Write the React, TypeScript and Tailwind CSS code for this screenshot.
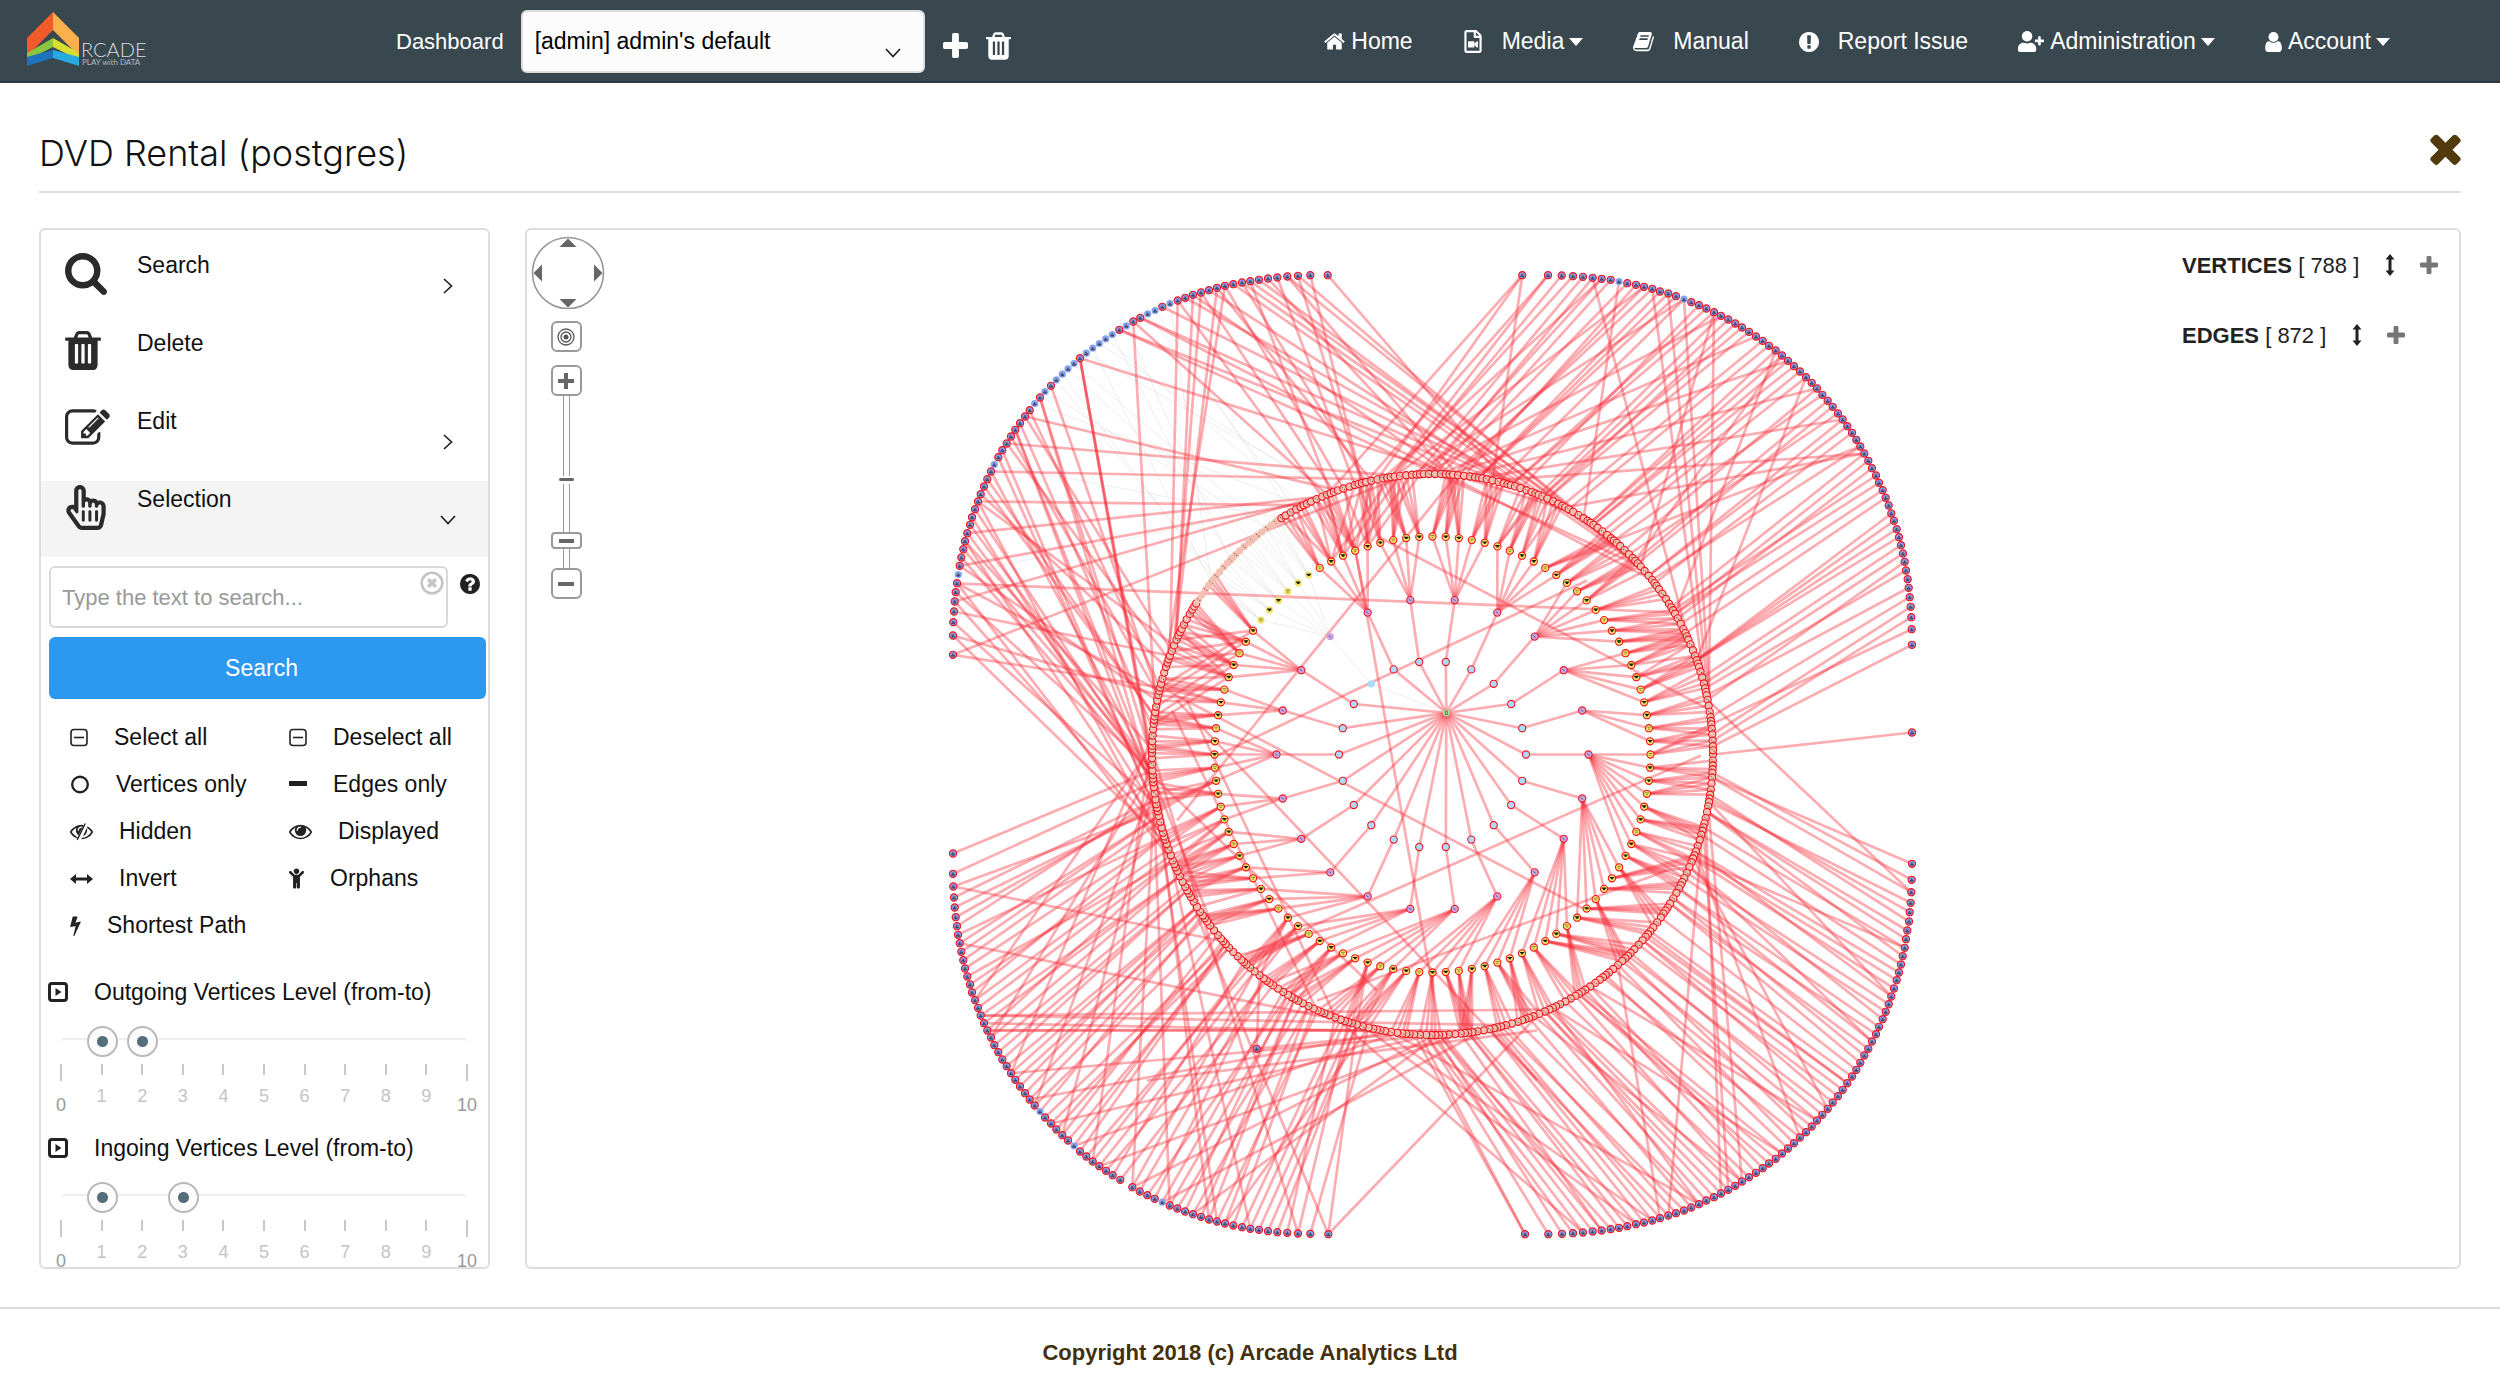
import { useState } from "react";
import type { ReactNode } from "react";
import { FaChild, FaRegFileVideo, FaRegHandPointer, FaUserPlus } from "react-icons/fa";
import clsx from "clsx";

/* ---------- icons ---------- */

const ICONS = {
    plus: "M1600 736v192q0 40-28 68t-68 28h-416v416q0 40-28 68t-68 28h-192q-40 0-68-28t-28-68v-416h-416q-40 0-68-28t-28-68v-192q0-40 28-68t68-28h416v-416q0-40 28-68t68-28h192q40 0 68 28t28 68v416h416q40 0 68 28t28 68z",
    times: "M1490 1322q0 40-28 68l-136 136q-28 28-68 28t-68-28l-294-294-294 294q-28 28-68 28t-68-28l-136-136q-28-28-28-68t28-68l294-294-294-294q-28-28-28-68t28-68l136-136q28-28 68-28t68 28l294 294 294-294q28-28 68-28t68 28l136 136q28 28 28 68t-28 68l-294 294 294 294q28 28 28 68z",
    trash: "M704 1376v-704q0-14-9-23t-23-9h-64q-14 0-23 9t-9 23v704q0 14 9 23t23 9h64q14 0 23-9t9-23zm256 0v-704q0-14-9-23t-23-9h-64q-14 0-23 9t-9 23v704q0 14 9 23t23 9h64q14 0 23-9t9-23zm256 0v-704q0-14-9-23t-23-9h-64q-14 0-23 9t-9 23v704q0 14 9 23t23 9h64q14 0 23-9t9-23zm-544-992h448l-48-117q-7-9-17-11h-317q-10 2-17 11zm928 32v64q0 14-9 23t-23 9h-96v948q0 83-47 143.500t-113 60.500h-832q-66 0-113-58.500t-47-141.500v-952h-96q-14 0-23-9t-9-23v-64q0-14 9-23t23-9h309l70-167q15-37 54-63t79-26h320q40 0 79 26t54 63l70 167h309q14 0 23 9t9 23z",
    search: "M1216 832q0-185-131.500-316.500t-316.500-131.500-316.500 131.500-131.500 316.500 131.500 316.500 316.500 131.500 316.500-131.500 131.500-316.500zm512 832q0 52-38 90t-90 38q-54 0-90-38l-343-342q-179 124-399 124-143 0-273.500-55.500t-225-150-150-225-55.500-273.500 55.500-273.500 150-225 225-150 273.500-55.500 273.500 55.500 225 150 150 225 55.500 273.500q0 220-124 399l343 343q37 37 37 90z",
    edit: "M888 1184l116-116-152-152-116 116v56h96v96h56zm440-720q-16-16-33 1l-350 350q-17 17-1 33t33-1l350-350q17-17 1-33zm80 594v190q0 119-84.500 203.500t-203.500 84.500h-832q-119 0-203.500-84.500t-84.500-203.500v-832q0-119 84.500-203.500t203.500-84.500h832q63 0 117 25 15 7 18 23 3 17-9 29l-49 49q-14 14-32 8-23-6-45-6h-832q-66 0-113 47t-47 113v832q0 66 47 113t113 47h832q66 0 113-47t47-113v-126q0-13 9-22l64-64q15-15 35-7t20 29zm-96-738l288 288-672 672h-288v-288zm444 132l-92 92-288-288 92-92q28-28 68-28t68 28l152 152q28 28 28 68t-28 68z",
    home: "M1472 992v480q0 26-19 45t-45 19h-384v-384h-256v384h-384q-26 0-45-19t-19-45v-480q0-1 .5-3t.5-3l575-474 575 474q1 2 1 6zm223-69l-62 74q-8 9-21 11h-3q-13 0-21-7l-692-577-692 577q-12 8-24 7-13-2-21-11l-62-74q-8-10-7-23.500t11-21.500l719-599q32-26 76-26t76 26l244 204v-195q0-14 9-23t23-9h192q14 0 23 9t9 23v408l219 182q10 8 11 21.500t-7 23.500z",
    user: "M1536 1399q0 109-62.500 187t-150.500 78h-854q-88 0-150.500-78t-62.500-187q0-85 8.500-160.500t31.500-152 58.500-131 94-89 134.500-34.500q131 128 313 128t313-128q76 0 134.500 34.500t94 89 58.500 131 31.500 152 8.500 160.500zm-256-887q0 159-112.500 271.500t-271.500 112.500-271.500-112.500-112.500-271.500 112.500-271.500 271.500-112.500 271.500 112.500 112.500 271.500z",
    eye: "M1664 960q-152-236-381-353 61 104 61 225 0 185-131.500 316.500t-316.500 131.500-316.500-131.500-131.500-316.500q0-121 61-225-229 117-381 353 133 205 333.500 326.500t434.500 121.500 434.500-121.500 333.500-326.500zm-720-384q0-20-14-34t-34-14q-125 0-214.500 89.500t-89.500 214.500q0 20 14 34t34 14 34-14 14-34q0-86 61-147t147-61q20 0 34-14t14-34zm848 384q0 34-20 69-140 230-376.500 368.500t-499.500 138.500-499.500-139-376.500-368q-20-35-20-69t20-69q140-229 376.500-368t499.500-139 499.500 139 376.500 368q20 35 20 69z",
    bolt: "M1333 566q18 20 7 44l-540 1157q-13 25-42 25-4 0-14-2-17-5-25.500-19t-4.500-30l197-808-406 101q-4 1-12 1-18 0-31-11-18-15-13-39l201-825q4-14 16-23t28-9h328q19 0 32 12.500t13 29.500q0 8-5 18l-171 463 396-98q8-2 12-2 19 0 34 15z",
    question: "M1024 1376v-192q0-14-9-23t-23-9h-192q-14 0-23 9t-9 23v192q0 14 9 23t23 9h192q14 0 23-9t9-23zm256-672q0-88-55.500-163t-138.500-116-170-41q-243 0-371 213-15 24 8 42l132 100q7 6 19 6 16 0 25-12 53-68 86-92 34-24 86-24 48 0 85.500 26t37.500 59q0 38-20 61t-68 45q-63 28-115.500 86.500t-52.500 125.500v36q0 14 9 23t23 9h192q14 0 23-9t9-23q0-19 21.500-49.500t54.500-49.500q32-18 49-28.500t46-35 44.500-48 28-60.500 12.500-81zm384 192q0 209-103 385.500t-279.500 279.500-385.500 103-385.500-103-279.500-279.500-103-385.500 103-385.500 279.500-279.500 385.500-103 385.500 103 279.500 279.500 103 385.500z",
    exclamation: "M896 128q209 0 385.500 103t279.500 279.500 103 385.500-103 385.500-279.500 279.500-385.500 103-385.500-103-279.500-279.500-103-385.500 103-385.500 279.500-279.500 385.500-103zm128 1247v-190q0-14-9-23.500t-22-9.500h-192q-13 0-23 10t-10 23v190q0 13 10 23t23 10h192q13 0 22-9.500t9-23.500zm-2-344l18-621q0-12-10-18-10-8-24-8h-220q-14 0-24 8-10 6-10 18l17 621q0 10 10 17.500t24 7.500h185q14 0 23.500-7.500t10.500-17.500z",
    book: "M1703 478q40 57 18 129l-275 906q-19 64-76.500 107.500t-122.500 43.500h-923q-77 0-148.500-53.500t-99.500-131.500q-24-67-2-127 0-4 3-27t4-37q1-8-3-21.500t-3-19.500q2-11 8-21t16.500-23.500 16.500-23.500q23-38 45-91.500t30-91.500q3-10 .5-30t-.5-28q3-11 17-28t17-23q21-36 42-92t25-90q1-9-2.500-32t.5-28q4-13 22-30.500t22-22.500q19-26 42.500-84.500t27.500-96.500q1-8-3-25.500t-2-26.500q2-8 9-18t18-23 17-21q8-12 16.500-30.500t15-35 16-36 19.500-32 26.500-23.500 36-11.500 47.500 5.500l-1 3q38-9 51-9h761q74 0 114 56t18 130l-274 906q-36 119-71.500 153.500t-128.500 34.500h-869q-27 0-38 15-11 16-1 43 24 70 144 70h923q29 0 56-15.500t35-41.500l300-987q7-22 5-57 38 15 59 43zm-1064 2q-4 13 2 22.500t20 9.500h608q13 0 25.500-9.500t16.500-22.500l21-64q4-13-2-22.500t-20-9.500h-608q-13 0-25.500 9.500t-16.500 22.500zm-83 256q-4 13 2 22.500t20 9.500h608q13 0 25.500-9.500t16.500-22.500l21-64q4-13-2-22.500t-20-9.500h-608q-13 0-25.500 9.500t-16.500 22.500z",
};

interface IconProps {
    name: keyof typeof ICONS;
    box?: string;
    className?: string;
}

// "box" crops the 1792 unit glyph cell to the part that has ink
function Icon({ name, box = "0 0 1792 1792", className }: IconProps) {
    return (
        <svg viewBox={box} fill="currentColor" className={clsx("shrink-0", className)} aria-hidden="true">
            <path d={ICONS[name]} />
        </svg>
    );
}

function Chevron({ down, className }: { down?: boolean; className?: string }) {
    return (
        <svg viewBox="0 0 16 16" fill="none" stroke="#222" strokeWidth="1.7" className={clsx("h-4 w-4 shrink-0", className)} aria-hidden="true">
            <path d={down ? "M1 4l7 7.500L15 4" : "M4 1l7.500 7L4 15"} />
        </svg>
    );
}

function ArrowV() {
    return (
        <svg viewBox="0 0 10 22" fill="#222" className="h-[22px] w-[10px]" aria-hidden="true">
            <path d="M5 0l4.500 5.500H6.500v11h3L5 22 .5 16.500h3v-11h-3z" />
        </svg>
    );
}

function Logo() {
    return (
        <svg viewBox="0 0 128 60" className="h-[60px] w-[128px]" role="img" aria-label="Arcade, play with data">
            <path fill="#f15a2b" d="M26 0v18L0 44V26z" />
            <path fill="#fbb04c" d="M26 0v18l26 26V26z" />
            <path fill="#8cc540" d="M26 26v9L0 48v-7z" />
            <path fill="#d8df30" d="M26 26v9l26 13v-7z" />
            <path fill="#1c75bc" d="M26 38v8L0 54v-9z" />
            <path fill="#27aae1" d="M26 38v8l26 8v-9z" />
            <text x="54" y="45" fontSize="20" fontFamily="Lato, sans-serif" fontWeight="300" fill="#d9dcde">RCADE</text>
            <text x="55" y="53" fontSize="8" fontFamily="Lato, sans-serif" fill="#b4babd">PLAY with DATA</text>
        </svg>
    );
}

/* ---------- header ---------- */

function NavLink({ icon, label, caret, wide }: { icon: ReactNode; label: string; caret?: boolean; wide?: boolean }) {
    return (
        <a href="#" className={clsx("flex items-center", wide ? "gap-[19px]" : "gap-[6px]")}>
            {icon}
            <span className="flex items-center gap-[5px]">
                {label}
                {caret && <span className="border-x-[7px] border-t-[8px] border-x-transparent border-t-white" />}
            </span>
        </a>
    );
}

function Header() {
    return (
        <header className="flex h-[83px] shrink-0 items-center border-b-2 border-[#2b3a42] bg-[#39474f] pt-[2px] pr-[110px] pl-[27px] text-[23px] text-white">
            <a href="#">
                <Logo />
            </a>
            <div className="ml-[241px] flex items-center">
                <label htmlFor="dashboard" className="text-[22px]">Dashboard</label>
                <div className="relative ml-[17px]">
                    <select id="dashboard" className="h-[63px] w-[404px] appearance-none rounded-md border-2 border-[#ddd] bg-[#fcfcfc] pl-3 text-black">
                        <option>[admin] admin&apos;s default</option>
                    </select>
                    <Chevron down className="pointer-events-none absolute right-6 bottom-3" />
                </div>
                <button type="button" aria-label="Add dashboard" className="mt-2 ml-[18px]">
                    <Icon name="plus" box="192 128 1408 1408" className="h-[25px] w-[25px]" />
                </button>
                <button type="button" aria-label="Delete dashboard" className="mt-2 ml-[18px]">
                    <Icon name="trash" box="192 128 1408 1536" className="h-[28px] w-[25px]" />
                </button>
            </div>
            <nav className="ml-auto flex items-center gap-[50px]">
                <NavLink icon={<Icon name="home" box="64 256 1664 1280" className="h-[17px] w-[21px]" />} label="Home" />
                <NavLink icon={<FaRegFileVideo className="h-[23px] w-[20px]" />} label="Media" caret wide />
                <NavLink icon={<Icon name="book" box="60 192 1680 1480" className="h-[20px] w-[21px]" />} label="Manual" wide />
                <NavLink icon={<Icon name="exclamation" box="128 128 1536 1536" className="h-[20px] w-[20px]" />} label="Report Issue" wide />
                <NavLink icon={<FaUserPlus className="h-[21px] w-[26px]" />} label="Administration" caret />
                <NavLink icon={<Icon name="user" box="256 128 1280 1536" className="h-[20px] w-[17px]" />} label="Account" caret />
            </nav>
        </header>
    );
}

/* ---------- left menu ---------- */

function MenuRow({ icon, label, arrow, active }: { icon: ReactNode; label: string; arrow?: "right" | "down"; active?: boolean }) {
    return (
        <button
            type="button"
            className={clsx("flex w-full items-start pr-[32px] pl-[24px] text-left text-[23px]", active ? "h-[76px] bg-[#f4f4f4]" : "h-[78px]")}
        >
            <span className="w-[72px] shrink-0 pt-1 text-[#2b2b2b]">{icon}</span>
            <span className="flex-1 pt-1 leading-7">{label}</span>
            {arrow && <Chevron down={arrow === "down"} className="mt-[31px]" />}
        </button>
    );
}

const strokeIcon = "h-[19px] shrink-0 fill-none stroke-[#222]";

const options: Array<{ label: string; icon: ReactNode }> = [
    { label: "Select all", icon: <MinusSquare /> },
    { label: "Deselect all", icon: <MinusSquare /> },
    { label: "Vertices only", icon: <svg viewBox="0 0 20 20" strokeWidth="2.500" className={clsx(strokeIcon, "w-[20px]")}><circle cx="10" cy="10" r="8.200" /></svg> },
    { label: "Edges only", icon: <svg viewBox="0 0 18 18" strokeWidth="5" className={clsx(strokeIcon, "w-[18px]")}><path d="M0 8h18" /></svg> },
    {
        label: "Hidden",
        icon: (
            <svg viewBox="0 256 1792 1408" className="h-[18px] w-[23px] shrink-0 fill-[#222]">
                <path d={ICONS.eye} />
                <path d="M1330 250L640 1640" stroke="white" strokeWidth="330" />
                <path d="M1190 300L560 1580" stroke="#222" strokeWidth="110" />
            </svg>
        ),
    },
    { label: "Displayed", icon: <Icon name="eye" box="0 256 1792 1408" className="h-[18px] w-[23px] text-[#222]" /> },
    { label: "Invert", icon: <svg viewBox="0 0 23 10" className="h-[10px] w-[23px] shrink-0 fill-[#222]"><path d="M0 5L6 0v3.500h11V0l6 5-6 5V6.500H6V10z" /></svg> },
    { label: "Orphans", icon: <FaChild className="h-[21px] w-[15px] text-[#222]" /> },
    { label: "Shortest Path", icon: <Icon name="bolt" box="448 0 896 1792" className="h-[21px] w-[11px] text-[#222]" /> },
];

function MinusSquare() {
    return (
        <svg viewBox="0 0 18 18" strokeWidth="1.600" className={clsx(strokeIcon, "w-[18px]")}>
            <rect x="1" y="1" width="16" height="16" rx="3" />
            <path d="M4 9h10" />
        </svg>
    );
}

const thumb =
    "[&::-webkit-slider-thumb]:pointer-events-auto [&::-webkit-slider-thumb]:h-[31px] [&::-webkit-slider-thumb]:w-[31px] [&::-webkit-slider-thumb]:appearance-none [&::-webkit-slider-thumb]:rounded-full [&::-webkit-slider-thumb]:border-2 [&::-webkit-slider-thumb]:border-[#b9b9b9] [&::-webkit-slider-thumb]:bg-[radial-gradient(circle,#546e7a_5px,#fcfcfc_6px)]";

function LevelSlider({ label, from, to }: { label: string; from: number; to: number }) {
    const [range, setRange] = useState([from, to]);

    return (
        <section className="h-[156px] pl-[7px]">
            <h3 className="flex items-center gap-[26px] text-[23px] leading-8">
                <svg viewBox="0 0 20 20" className="h-[20px] w-[20px] fill-none stroke-[#222]" strokeWidth="3" aria-hidden="true">
                    <rect x="1.500" y="1.500" width="17" height="17" rx="2.500" />
                    <path d="M7.500 6v8l6-4z" fill="#222" stroke="none" />
                </svg>
                {label}
            </h3>
            <div className="mt-[18px] mr-[21px] ml-[13px]">
                <div className="mx-[-15px] grid h-[31px] items-center">
                    <div className="mx-[15px] h-[8px] rounded-full border-t-2 border-[#eee] [grid-area:1/1]" />
                    {range.map((value, i) => (
                        <input
                            key={i}
                            type="range"
                            min={0}
                            max={10}
                            value={value}
                            aria-label={`${label} ${i === 0 ? "from" : "to"}`}
                            onChange={(e) => setRange(range.map((v, k) => (k === i ? Number(e.target.value) : v)))}
                            className={clsx("pointer-events-none z-10 m-0 h-[31px] w-full appearance-none bg-transparent [grid-area:1/1]", thumb)}
                        />
                    ))}
                </div>
                <div className="mt-[7px] flex justify-between text-[18px]">
                    {Array.from({ length: 11 }, (_, n) => {
                        const big = n % 10 === 0;
                        return (
                            <div key={n} className={clsx("flex w-0 flex-col items-center leading-6", big ? "text-[#999]" : "text-[#c4c4c4]")}>
                                <span className={clsx("w-[2px] shrink-0 bg-[#c8c8c8]", big ? "mb-3 h-[17px]" : "mb-[9px] h-[11px]")} />
                                {n}
                            </div>
                        );
                    })}
                </div>
            </div>
        </section>
    );
}

function Sidebar() {
    return (
        <aside className="w-[451px] shrink-0 overflow-hidden rounded-md border-2 border-[#ddd] pt-[17px]">
            <MenuRow icon={<Icon name="search" box="64 128 1664 1664" className="mt-[2px] h-[42px] w-[42px]" />} label="Search" arrow="right" />
            <MenuRow icon={<Icon name="trash" box="192 128 1408 1536" className="mt-[2px] h-[39px] w-[36px]" />} label="Delete" />
            <MenuRow icon={<Icon name="edit" box="0 128 1792 1408" className="mt-[2px] h-[36px] w-[45px]" />} label="Edit" arrow="right" />
            <MenuRow icon={<FaRegHandPointer className="h-[45px] w-[42px]" />} label="Selection" arrow="down" active />

            <form className="mt-[9px] pr-[2px] pl-[8px]" onSubmit={(e) => e.preventDefault()}>
                <div className="flex items-start">
                    <div className="relative">
                        <input
                            type="text"
                            aria-label="Text to search"
                            placeholder="Type the text to search..."
                            className="h-[62px] w-[399px] rounded-md border-2 border-[#d9d9d9] pt-[2px] pl-[11px] text-[22px] placeholder:text-[#999]"
                        />
                        <button type="button" aria-label="Clear" className="absolute top-[5px] right-[4px]">
                            <svg viewBox="0 0 24 24" fill="none" stroke="#c4c4c4" className="h-[24px] w-[24px]">
                                <circle cx="12" cy="12" r="10.300" strokeWidth="2.600" />
                                <path d="M8.200 8.200l7.600 7.600M15.800 8.200l-7.600 7.600" strokeWidth="3.600" />
                            </svg>
                        </button>
                    </div>
                    <button type="button" aria-label="Help" className="mt-2 ml-3">
                        <Icon name="question" box="128 128 1536 1536" className="h-[20px] w-[20px] text-[#222]" />
                    </button>
                </div>
                <button type="submit" className="mt-[9px] h-[62px] w-full rounded-md bg-[#2d98f0] pr-3 text-[23px] text-white">Search</button>
            </form>

            <div className="mt-[15px] grid grid-cols-[219px_1fr] pl-[29px] text-[23px]">
                {options.map((option) => (
                    <button key={option.label} type="button" className="flex h-[47px] items-center gap-[26px] text-left">
                        {option.icon}
                        {option.label}
                    </button>
                ))}
            </div>

            <div className="mt-[27px]">
                <LevelSlider label="Outgoing Vertices Level (from-to)" from={1} to={2} />
                <LevelSlider label="Ingoing Vertices Level (from-to)" from={1} to={3} />
            </div>
        </aside>
    );
}

/* ---------- graph ---------- */

type Point = [number, number];

const CX = 905.5;
const CY = 524;

const polar = (deg: number, r: number): Point => [
    CX + r * Math.cos((deg * Math.PI) / 180),
    CY + r * Math.sin((deg * Math.PI) / 180),
];

// outer leaves come as flat x,y lists in thirds of a unit
const unpack = (flat: number[], dx: number, dy: number): Point[] => {
    const out: Point[] = [];
    for (let i = 0; i < flat.length; i += 2) out.push([flat[i] / 3 + dx, flat[i + 1] / 3 + dy]);
    return out;
};

const topLeft = unpack([1193,74,1141,74,1104,76,1072,78,1042,81,1014,84,987,88,961,92,936,96,910,101,885,106,861,112,837,119,813,126,789,133,766,142,743,150,720,159,697,169,675,180,653,190,631,202,610,213,589,226,568,238,547,252,527,265,508,279,488,293,469,308,450,323,432,339,414,355,397,371,379,388,363,406,345,423,330,441,314,459,299,479,285,498,270,518,256,538,243,558,230,579,217,599,205,620,193,642,183,663,172,686,162,708,152,731,144,753,135,776,126,800,120,823,112,848,105,872,100,896,94,921,89,946,85,972,81,998,77,1025,74,1053,72,1083,70,1115,69,1155,69,1213], 403, 20);
const topRight = unpack([307,74,384,74,425,75,459,77,489,79,518,82,545,85,572,88,597,93,622,98,648,103,672,109,697,115,720,123,745,129,768,137,792,146,814,155,837,164,859,174,882,185,903,196,925,207,946,219,966,231,987,244,1008,258,1028,271,1047,286,1067,300,1086,315,1104,331,1122,347,1140,363,1158,380,1175,397,1191,414,1207,433,1223,451,1238,469,1254,489,1268,507,1282,527,1296,547,1309,568,1321,588,1333,609,1345,631,1356,653,1368,675,1377,697,1388,719,1397,742,1406,765,1414,789,1422,811,1430,836,1437,860,1443,884,1449,909,1454,934,1458,960,1463,986,1466,1012,1469,1040,1472,1069,1474,1100,1475,1136,1476,1183,1476,1446], 893, 20);
const bottomRight = unpack([1476,370,1475,418,1474,455,1472,487,1469,515,1467,543,1462,570,1458,596,1454,622,1448,647,1443,672,1437,696,1430,719,1422,744,1414,768,1406,791,1397,814,1388,836,1377,859,1368,881,1356,903,1345,925,1333,945,1321,967,1309,988,1296,1008,1282,1028,1268,1048,1254,1067,1238,1086,1223,1105,1207,1123,1191,1140,1175,1158,1158,1175,1140,1191,1122,1208,1104,1224,1086,1239,1067,1255,1047,1269,1028,1283,1008,1297,987,1310,966,1323,946,1336,925,1348,903,1359,882,1370,859,1380,837,1391,814,1401,792,1410,768,1418,745,1425,720,1433,697,1440,672,1446,648,1451,622,1457,597,1462,572,1466,545,1470,518,1473,489,1476,459,1478,426,1480,385,1481,315,1481], 893, 510);
const bottomLeft = unpack([69,339,69,400,70,438,72,471,74,501,77,530,81,557,84,583,89,608,94,634,100,659,105,684,112,708,120,732,126,756,135,779,144,802,152,825,162,848,172,870,183,891,193,914,205,935,217,957,230,977,243,998,256,1018,270,1038,285,1058,299,1077,314,1095,330,1113,345,1131,363,1149,379,1167,397,1184,414,1200,432,1216,450,1233,469,1248,488,1263,508,1277,528,1291,548,1304,571,1318,607,1340,629,1353,652,1364,674,1375,697,1385,719,1395,742,1404,765,1413,789,1421,813,1429,837,1437,861,1443,885,1449,910,1455,936,1460,961,1465,987,1468,1014,1472,1042,1475,1072,1477,1104,1479,1141,1480,1195,1481,980,925], 403, 510);

const plainTopLeft = new Set([17, 19, 20, 23, 25, 26, 27, 28, 29, 31, 32, 33, 34, 36, 38, 47, 61]);
const plainTopRight = new Set([8, 16]);
const plainBottomLeft = new Set([31, 37, 49]);

const hub: Point = [919.3, 482.3];
const blues = Array.from({ length: 22 }, (_, i) => polar((i * 360) / 22, 93.5));
const purples = Array.from({ length: 22 }, (_, i) => polar((i * 360) / 22, 156));
const yellows = Array.from({ length: 104 }, (_, i) => polar((i * 360) / 104, 218));
const RING = 362;
const ring = Array.from({ length: RING }, (_, i) => polar(((i + Math.sin(i * 7.3) * 0.3) * 360) / RING, 280.5));

// first yellow vertex owned by each purple one
const yellowStart = [0, 9, 15, 20, 24, 29, 34, 38, 42, 44, 47, 50, 55, 58, 63, 69, 74, 78, 83, 89, 96, 101, 104];
const HIDDEN = 14;

const ringAt = (deg: number) => ring[Math.round((((deg % 360) + 360) % 360) / (360 / RING)) % RING];
const isPlainRing = (i: number) => {
    const deg = (i * 360) / RING;
    return deg > 213 && deg < 237;
};

// long links that run across the inner circles: x1, y1, x2, y2
const chords = [
    [430, 353, 1150, 382],
    [818, 260, 913, 800],
    [640, 460, 1060, 680],
    [1174, 525, 718, 725],
    [650, 470, 1010, 850],
    [650, 590, 925, 250],
    [853, 307, 1184, 480],
    [690, 525, 1060, 350],
    [620, 540, 850, 760],
    [645, 480, 790, 780],
    [660, 470, 810, 790],
    [1010, 800, 620, 850],
    [1140, 640, 790, 770],
];

function buildEdges() {
    let seed = 11;
    const rnd = () => {
        seed = (seed * 16807) % 2147483647;
        return seed / 2147483647;
    };
    const between = (a: number, b: number) => a + rnd() * (b - a);

    const red: Array<[Point, Point]> = [];
    const grey: Array<[Point, Point]> = [];

    blues.forEach((p, i) => {
        const list = i === HIDDEN ? grey : red;
        list.push([hub, p], [p, purples[i]]);
        for (let j = yellowStart[i]; j < yellowStart[i + 1]; j++) list.push([purples[i], yellows[j]]);
    });

    yellows.forEach((p, j) => {
        const deg = (j * 360) / 104;
        const hidden = j >= 63 && j < 69;
        let skew = between(-4, 4);
        if (deg > 28 && deg < 60) skew = j % 3 === 0 ? between(4, 8) : between(-13, -8);
        if (deg > 95 && deg < 150) skew = between(-2, 9);
        if (deg > 300 && deg < 335) skew = between(2, 10);
        for (let k = -1.5; k <= 1.5; k++) {
            const list = hidden ? grey : red;
            list.push([p, ringAt(deg + (hidden ? 0 : skew) + k * 1.1)]);
        }
    });

    // the busy bundles just outside the hidden branch
    for (let k = 0; k < 12; k++) {
        red.push([yellows[70 + (k % 4)], ringAt(246 + k * 2)]);
        red.push([yellows[58 + (k % 5)], ringAt(186 + k * 2)]);
    }

    topRight.forEach((p, i) => {
        const t = i / (topRight.length - 1);
        if (i % 9 !== 8) red.push([p, ringAt(-100 + t * 99 + between(-3, 3))]);
        if (i % 5 === 1 && i < 50) red.push([p, ringAt(-104 + t * 40)]);
    });
    [[12, -14], [14, -9], [16, -6], [20, -42], [5, -24], [8, -58], [29, -30], [34, -20], [20, -10], [30, -44], [45, -50], [0, -78], [0, -112], [46, -62]].forEach(([i, a]) => red.push([topRight[i], ringAt(a)]));

    bottomRight.forEach((p, i) => {
        const t = i / (bottomRight.length - 1);
        red.push([p, ringAt(3 + t * 92 + between(-3, 3))]);
        if (i % 6 === 2) red.push([p, ringAt(t * 110 + between(-20, 14))]);
    });
    [[55, 49], [54, 16], [46, 15], [47, 13], [44, 11], [30, 22], [35, 20], [50, 98], [58, 104], [64, 110]].forEach(([i, a]) => red.push([bottomRight[i], ringAt(a)]));

    bottomLeft.slice(0, -1).forEach((p, i) => {
        const t = i / 67;
        red.push([p, ringAt(174 - t * 70 + between(-4, 4))]);
        if (i > 10 && i % 5 === 0) red.push([p, ringAt(between(160, 190))]);
        if (i > 22 && i < 60 && i % 4 === 1) red.push([p, ringAt(between(78, 104))]);
    });
    [[2, 138], [8, 108], [17, 75], [17, 66], [19, 80], [19, 100], [18, 84], [67, 152], [67, 68], [56, 172], [68, 96], [68, 128]].forEach(([i, a]) => red.push([bottomLeft[i], ringAt(a)]));

    topLeft.forEach((p, i) => {
        if (plainTopLeft.has(i)) {
            grey.push([p, ringAt(between(215, 250))]);
            return;
        }
        if (i < 26) {
            red.push([p, ringAt(i % 3 === 0 ? between(-75, -38) : i % 3 === 1 ? between(-116, -104) : between(-112, -80))]);
            if (i > 8 && i % 3 !== 0) red.push([p, ringAt(between(178, 206))]);
        } else {
            red.push([p, ringAt(between(160, 204))]);
            if (i % 4 === 0) red.push([p, ringAt(between(-118, -85))]);
            if (i % 5 === 2) red.push([p, ringAt(between(140, 165))]);
        }
    });
    [[30, 178], [30, 160], [30, -60], [7, -52], [8, -45], [2, -40], [3, -85], [24, -75], [21, -70]].forEach(([i, a]) => red.push([topLeft[i], ringAt(a)]));

    return { red, grey };
}

const edges = buildEdges();

function Edge({ from, to }: { from: Point; to: Point }) {
    return <line x1={from[0].toFixed(1)} y1={from[1].toFixed(1)} x2={to[0].toFixed(1)} y2={to[1].toFixed(1)} />;
}

function Vertex({ at, fill, plain, mark }: { at: Point; fill: string; plain?: boolean; mark?: ReactNode }) {
    return (
        <g transform={`translate(${at[0].toFixed(1)} ${at[1].toFixed(1)})`}>
            <circle r="3.600" fill={fill} stroke={plain ? "none" : "#f0141e"} strokeWidth="1.100" />
            {mark}
        </g>
    );
}

const personMark = <path d="M-1.800 2V.2h1V-1.200h1.400V.2h1.200V2z" fill="#454a66" />;
const labelMark = <path d="M-2.200-1.400h4.400v1.200h-1v1.200h-2.200V-.2h-1.200z" fill="#1d1a08" />;
const faintMark = <path d="M-2-1h4M-1 .8h2" stroke="#7d7430" strokeWidth=".8" />;

function Graph() {
    return (
        <svg viewBox="0 0 1932 1036" className="h-full w-full" role="img" aria-label="Graph with 788 vertices and 872 edges">
            <g stroke="#ddd" strokeOpacity=".5" strokeWidth="1">
                {edges.grey.map(([a, b], i) => <Edge key={i} from={a} to={b} />)}
            </g>
            <g stroke="#f82834" strokeOpacity=".38" strokeWidth="2.700">
                {edges.red.map(([a, b], i) => <Edge key={i} from={a} to={b} />)}
                {chords.map(([x1, y1, x2, y2], i) => <Edge key={`chord-${i}`} from={[x1, y1]} to={[x2, y2]} />)}
            </g>
            {ring.map((p, i) => (
                <Vertex key={i} at={p} fill="#f3c0b4" plain={isPlainRing(i)} mark={i % 2 ? <path d="M-1.500-.8h1M.5.8h1.200" stroke="#5b4038" strokeWidth=".9" /> : undefined} />
            ))}
            {topLeft.map((p, i) => <Vertex key={i} at={p} fill={plainTopLeft.has(i) ? "#86a4ee" : "#8c93dc"} plain={plainTopLeft.has(i)} mark={personMark} />)}
            {topRight.map((p, i) => <Vertex key={i} at={p} fill={plainTopRight.has(i) ? "#86a4ee" : "#8c93dc"} plain={plainTopRight.has(i)} mark={personMark} />)}
            {bottomRight.map((p, i) => <Vertex key={i} at={p} fill="#8c93dc" mark={personMark} />)}
            {bottomLeft.map((p, i) => <Vertex key={i} at={p} fill={plainBottomLeft.has(i) ? "#86a4ee" : "#8c93dc"} plain={plainBottomLeft.has(i)} mark={personMark} />)}
            {yellows.map((p, i) => <Vertex key={i} at={p} fill="#f0e268" plain={i >= 63 && i < 69} mark={i % 3 ? labelMark : faintMark} />)}
            {purples.map((p, i) => <Vertex key={i} at={p} fill="#c9a4e4" plain={i === HIDDEN} mark={<path d="M-1.500-1l2.500 2" stroke="#6d5a7c" />} />)}
            {blues.map((p, i) => <Vertex key={i} at={p} fill="#a9dcfd" plain={i === HIDDEN} />)}
            <Vertex at={hub} fill="#9be39b" plain mark={<rect x="-1" y="-1.800" width="2" height="3.600" fill="none" stroke="#a4483c" strokeWidth=".8" />} />
        </svg>
    );
}

const zoomButton = "flex h-[31px] w-[31px] items-center justify-center rounded-md border-2 border-[#999] bg-white";

function MapControls() {
    const [zoom, setZoom] = useState(12);

    return (
        <div className="absolute top-[6px] left-[4px] flex w-[74px] flex-col items-center">
            <button type="button" aria-label="Pan">
                <svg viewBox="0 0 74 74" className="h-[74px] w-[74px]" fill="#666">
                    <circle cx="37" cy="37" r="35.500" fill="white" stroke="#999" strokeWidth="1.600" />
                    <path d="M37 2.500l8.500 8.500h-17zM37 71.500l8.500-8.500h-17zM2.500 37l8.500-8.500v17zM71.500 37L63 28.500v17z" />
                </svg>
            </button>
            <div className="mt-[11px] mr-1 flex flex-col items-center">
                <button type="button" aria-label="Fit" className={zoomButton}>
                    <svg viewBox="0 0 18 18" className="h-[18px] w-[18px]" fill="none" stroke="#555" strokeWidth="1.300">
                        <circle cx="9" cy="9" r="8" />
                        <circle cx="9" cy="9" r="5" />
                        <circle cx="9" cy="9" r="2.500" fill="#555" stroke="none" />
                    </svg>
                </button>
                <button type="button" aria-label="Zoom in" className={clsx(zoomButton, "mt-[13px]")}>
                    <svg viewBox="0 0 16 16" className="h-4 w-4" stroke="#666" strokeWidth="4"><path d="M8 0v16M0 8h16" /></svg>
                </button>
                <div className="relative h-[172px] w-[31px]">
                    <input
                        type="range"
                        aria-label="Zoom"
                        value={zoom}
                        onChange={(e) => setZoom(Number(e.target.value))}
                        className="m-0 h-full w-full appearance-none bg-[linear-gradient(90deg,transparent_12px,#999_12px,#999_13px,transparent_13px,transparent_18px,#999_18px,#999_19px,transparent_19px)] [direction:rtl] [writing-mode:vertical-lr] [&::-webkit-slider-thumb]:h-[17px] [&::-webkit-slider-thumb]:w-[31px] [&::-webkit-slider-thumb]:appearance-none [&::-webkit-slider-thumb]:rounded [&::-webkit-slider-thumb]:border-2 [&::-webkit-slider-thumb]:border-[#999] [&::-webkit-slider-thumb]:bg-white [&::-webkit-slider-thumb]:bg-[linear-gradient(#666,#666)] [&::-webkit-slider-thumb]:bg-[length:15px_4px] [&::-webkit-slider-thumb]:bg-center [&::-webkit-slider-thumb]:bg-no-repeat"
                    />
                    <span className="pointer-events-none absolute top-[80px] left-2 h-2 w-[15px] bg-white py-[2px]">
                        <span className="block h-[3px] rounded bg-[#666]" />
                    </span>
                </div>
                <button type="button" aria-label="Zoom out" className={zoomButton}>
                    <svg viewBox="0 0 16 16" className="h-4 w-4" stroke="#666" strokeWidth="4"><path d="M0 8h16" /></svg>
                </button>
            </div>
        </div>
    );
}

function Counter({ label, count }: { label: string; count: number }) {
    return (
        <div className="flex h-[70px] items-center text-[22px] text-[#222]">
            <span><b>{label}</b> [ {count} ]</span>
            <button type="button" aria-label={`Sort ${label.toLowerCase()}`} className="ml-[26px]">
                <ArrowV />
            </button>
            <button type="button" aria-label={`Expand ${label.toLowerCase()}`} className="ml-[25px] text-[#777]">
                <Icon name="plus" box="192 128 1408 1408" className="h-[18px] w-[18px]" />
            </button>
        </div>
    );
}

export default function App() {
    return (
        <div className="flex h-screen flex-col bg-white font-['Liberation_Sans',Arial,sans-serif] text-[#111]">
            <Header />
            <main className="flex min-h-0 flex-1 flex-col px-[39px]">
                <div className="flex h-[110px] shrink-0 items-center justify-between border-b-2 border-[#ddd] pt-[31px]">
                    <h1 className="font-[Inter,sans-serif] text-[36px] font-light">DVD Rental (postgres)</h1>
                    <button type="button" aria-label="Close" className="mb-2 text-[#513b0c]">
                        <Icon name="times" box="302 302 1188 1252" className="h-[32px] w-[31px]" />
                    </button>
                </div>
                <div className="mt-[35px] flex min-h-0 flex-1 gap-[35px]">
                    <Sidebar />
                    <section className="relative min-w-0 flex-1 rounded-md border-2 border-[#ddd]">
                        <Graph />
                        <MapControls />
                        <div className="absolute top-0 right-0 w-[277px]">
                            <Counter label="VERTICES" count={788} />
                            <Counter label="EDGES" count={872} />
                        </div>
                    </section>
                </div>
            </main>
            <footer className="mt-[38px] flex h-[87px] shrink-0 items-center justify-center border-t-2 border-[#ddd] pt-[2px] text-[22px] font-bold text-[#43300c]">
                Copyright 2018 (c) Arcade Analytics Ltd
            </footer>
        </div>
    );
}
